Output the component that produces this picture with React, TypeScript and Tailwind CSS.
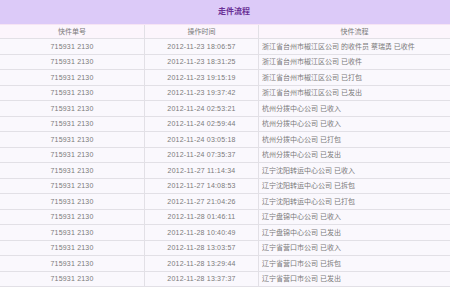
import React from 'react';

const rows: [string, string, string][] = [
  ['715931 2130', '2012-11-23 18:06:57', '浙江省台州市椒江区公司 的收件员 蔡瑞勇 已收件'],
  ['715931 2130', '2012-11-23 18:31:25', '浙江省台州市椒江区公司 已收件'],
  ['715931 2130', '2012-11-23 19:15:19', '浙江省台州市椒江区公司 已打包'],
  ['715931 2130', '2012-11-23 19:37:42', '浙江省台州市椒江区公司 已发出'],
  ['715931 2130', '2012-11-24 02:53:21', '杭州分拨中心公司 已收入'],
  ['715931 2130', '2012-11-24 02:59:44', '杭州分拨中心公司 已收入'],
  ['715931 2130', '2012-11-24 03:05:18', '杭州分拨中心公司 已打包'],
  ['715931 2130', '2012-11-24 07:35:37', '杭州分拨中心公司 已发出'],
  ['715931 2130', '2012-11-27 11:14:34', '辽宁沈阳转运中心公司 已收入'],
  ['715931 2130', '2012-11-27 14:08:53', '辽宁沈阳转运中心公司 已拆包'],
  ['715931 2130', '2012-11-27 21:04:26', '辽宁沈阳转运中心公司 已打包'],
  ['715931 2130', '2012-11-28 01:46:11', '辽宁盘锦中心公司 已收入'],
  ['715931 2130', '2012-11-28 10:40:49', '辽宁盘锦中心公司 已发出'],
  ['715931 2130', '2012-11-28 13:03:57', '辽宁省营口市公司 已收入'],
  ['715931 2130', '2012-11-28 13:29:44', '辽宁省营口市公司 已拆包'],
  ['715931 2130', '2012-11-28 13:37:37', '辽宁省营口市公司 已发出'],
];

export default function App() {
  return (
    <div
      className="w-[450px] h-[291px] bg-white overflow-hidden text-[#7a7a7a]"
      style={{ fontFamily: '"Liberation Sans", "Noto Sans CJK SC", sans-serif' }}
    >
      {/* Title bar */}
      <div className="h-[24px] bg-[#dccaf8] flex items-center pl-[218px]">
        <span className="text-[8px] font-bold text-[#6a2f95]">走件流程</span>
      </div>

      <div className="h-[1px] bg-[#f6e4f4]" />

      {/* Table header */}
      <div className="grid grid-cols-[145px_114px_1fr] h-[14px] bg-[#fcf5fc] border-b border-[#e2e0e6] text-[7px] leading-none">
        <div className="flex items-center justify-center border-r border-[#e2e0e6]">快件单号</div>
        <div className="flex items-center justify-center border-r border-[#e2e0e6]">操作时间</div>
        <div className="flex items-center justify-center">快件流程</div>
      </div>

      {/* Rows */}
      {rows.map((r, i) => (
        <div
          key={i}
          className="grid grid-cols-[145px_114px_1fr] h-[15.5px] bg-[#faf8fd] border-b border-[#e2e0e6] text-[7px] leading-none"
        >
          <div className="flex items-center justify-center border-r border-[#e2e0e6] tracking-[0.2px]">{r[0]}</div>
          <div className="flex items-center justify-center border-r border-[#e2e0e6] tracking-[0.2px]">{r[1]}</div>
          <div className="flex items-center pl-[3px] whitespace-nowrap">{r[2]}</div>
        </div>
      ))}
    </div>
  );
}
